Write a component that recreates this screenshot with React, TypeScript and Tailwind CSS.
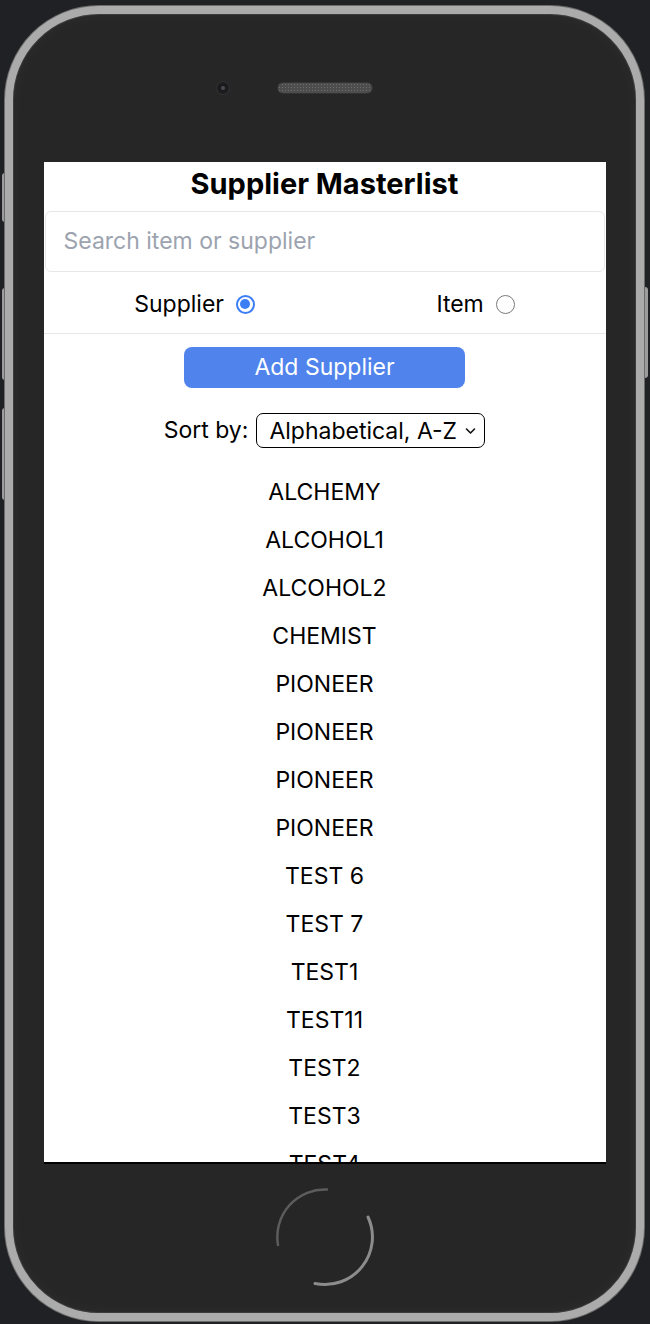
import React from 'react';

const suppliers = [
  'ALCHEMY',
  'ALCOHOL1',
  'ALCOHOL2',
  'CHEMIST',
  'PIONEER',
  'PIONEER',
  'PIONEER',
  'PIONEER',
  'TEST 6',
  'TEST 7',
  'TEST1',
  'TEST11',
  'TEST2',
  'TEST3',
  'TEST4',
];

function Radio({ checked }: { checked: boolean }) {
  if (checked) {
    return (
      <span className="flex h-[19px] w-[19px] items-center justify-center rounded-full border-2 border-[#3b7ef6] bg-white">
        <span className="h-[10px] w-[10px] rounded-full bg-[#3b7ef6]" />
      </span>
    );
  }
  return <span className="h-[19px] w-[19px] rounded-full border-[1.5px] border-[#7a7a7a] bg-white" />;
}

function HomeButton() {
  return (
    <svg width="100" height="100" viewBox="0 0 100 100">
      <circle cx="50" cy="50" r="48" fill="#262626" />
      {/* top-left arc */}
      <path d="M 52 2.5 A 47.5 47.5 0 0 0 3 58" fill="none" stroke="#6a6a6a" strokeWidth="2.5" strokeLinecap="round" opacity="0.8" />
      {/* bottom-right arc */}
      <path d="M 93 30 A 47.5 47.5 0 0 1 40 96.5" fill="none" stroke="#8c8c8c" strokeWidth="3" strokeLinecap="round" />
    </svg>
  );
}

export default function App() {
  return (
    <div className="relative h-[1324px] w-[650px] overflow-hidden bg-[#202124] pl-[5px] pt-[6px] font-['Inter','Noto_Sans',sans-serif]">
      {/* side buttons */}
      <div className="absolute left-[2px] top-[173px] h-[49px] w-[8px] rounded-l-[3px] bg-[#9c9c9c]" />
      <div className="absolute left-[2px] top-[288px] h-[92px] w-[8px] rounded-l-[3px] bg-[#9c9c9c]" />
      <div className="absolute left-[2px] top-[408px] h-[92px] w-[8px] rounded-l-[3px] bg-[#9c9c9c]" />
      <div className="absolute left-[640px] top-[287px] h-[91px] w-[8px] rounded-r-[3px] bg-[#9c9c9c]" />

      {/* phone body */}
      <div className="relative flex h-[1315px] w-[639px] flex-col items-center rounded-[94px] border-[8px] border-[#ababab] bg-[#262626] shadow-[0_0_0_1px_#6b6b6b,inset_0_0_0_1px_#3c3c3c,inset_0_0_18px_rgba(255,255,255,0.04)]">
        {/* top: camera + speaker */}
        <div className="flex h-[148px] w-full justify-center pt-[68px]">
          <div className="flex h-[12px] items-center gap-[49px]">
            <span className="flex h-[12px] w-[12px] items-center justify-center rounded-full bg-[#1c1c1e] shadow-[0_0_0_1px_#333]">
              <span className="h-[4px] w-[4px] rounded-full bg-[#4a4a52]" />
            </span>
            <span className="h-[10px] w-[94px] rounded-full bg-[#4d4d4d] bg-[radial-gradient(#6e6e6e_1px,transparent_1px)] bg-[length:3px_3px] shadow-[0_0_0_1px_#333]" />
            <span className="h-[12px] w-[12px]" />
          </div>
        </div>

        {/* screen */}
        <div className="h-[1002px] w-[562px] overflow-hidden border-b-2 border-black bg-white text-black">
          <h1 className="flex h-[49px] items-center justify-center pb-[6px] text-[29px] font-bold leading-none">
            Supplier Masterlist
          </h1>

          <div className="mx-px flex h-[61px] items-center rounded-md border border-[#e5e7eb] px-[18px]">
            <input
              className="w-full bg-transparent text-[23px] outline-none placeholder:text-[#9ca3af]"
              placeholder="Search item or supplier"
            />
          </div>

          <div className="flex h-[62px] items-center justify-around border-b border-[#e5e7eb] pt-[3px] text-[23px]">
            <label className="flex items-center gap-[12px]">
              <span>Supplier</span>
              <Radio checked />
            </label>
            <label className="flex items-center gap-[12px]">
              <span>Item</span>
              <Radio checked={false} />
            </label>
          </div>

          <div className="flex justify-center pt-[13px]">
            <button className="flex h-[41px] w-[281px] items-center justify-center rounded-[8px] bg-[#5084ec] text-[23px] text-white">
              Add Supplier
            </button>
          </div>

          <div className="flex items-center justify-center gap-[8px] pt-[25px] text-[23px]">
            <span>Sort by:</span>
            <div className="flex h-[35px] w-[229px] items-center justify-between rounded-[7px] border-[1.5px] border-black pl-[12px] pr-[8px] pt-px">
              <span>Alphabetical, A-Z</span>
              <svg width="11" height="8" viewBox="0 0 11 8" fill="none">
                <path d="M1.5 2 L5.5 6 L9.5 2" stroke="#111" strokeWidth="1.6" strokeLinecap="round" strokeLinejoin="round" />
              </svg>
            </div>
          </div>

          <ul className="pt-[20px] text-[23px]">
            {suppliers.map((s, i) => (
              <li key={i} className="flex h-[48px] items-center justify-center">
                {s}
              </li>
            ))}
          </ul>
        </div>

        {/* bottom: home button */}
        <div className="flex w-full justify-center pt-[23px]">
          <HomeButton />
        </div>
      </div>
    </div>
  );
}
